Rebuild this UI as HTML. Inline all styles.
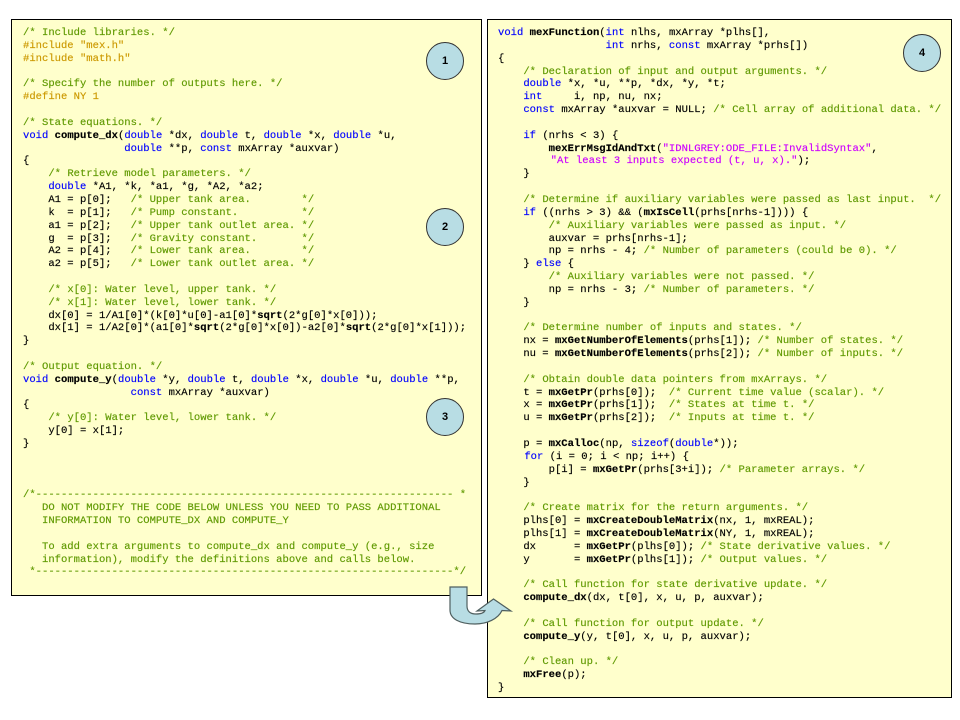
<!DOCTYPE html>
<html><head><meta charset="utf-8"><style>
html,body{margin:0;padding:0;background:#fff}
#p{position:relative;width:960px;height:720px;overflow:hidden;background:#fff}
.b{position:absolute;background:#ffc;border:1px solid #000;box-sizing:border-box}
pre{position:absolute;margin:0;font:10.55px/12.85px "Liberation Mono",monospace;color:#000;white-space:pre;-webkit-text-stroke:.15px currentColor}
i{font-style:normal;color:#5f9900}
u{text-decoration:none;color:#c90}
s{text-decoration:none;color:#00f}
b{font-weight:bold}
em{font-style:normal;color:#c0f}
.n{position:relative}
.c{position:absolute;width:38px;height:38px;border-radius:50%;background:#b8dde4;border:1px solid #333;box-sizing:border-box;text-align:center;font:bold 11px/36px "Liberation Sans",sans-serif;color:#000}
</style></head><body><div id="p">
<div class="b" style="left:11px;top:19px;width:471px;height:577px"></div>
<div class="b" style="left:487px;top:19px;width:465px;height:679px"></div>
<pre style="left:23px;top:27px"><i>/* Include libraries. */</i>
<u>#include "mex.h"</u>
<u>#include "math.h"</u>

<i>/* Specify the number of outputs here. */</i>
<u>#define NY 1</u>

<i>/* State equations. */</i>
<s>void</s> <b>compute_dx</b>(<s>double</s> *dx, <s>double</s> t, <s>double</s> *x, <s>double</s> *u,
                <s>double</s> **p, <s>const</s> mxArray *auxvar)
{
    <i>/* Retrieve model parameters. */</i>
    <s>double</s> *A1, *k, *a1, *g, *A2, *a2;
    A1 = p[0];   <i>/* Upper tank area.        */</i>
    k  = p[1];   <i>/* Pump constant.          */</i>
    a1 = p[2];   <i>/* Upper tank outlet area. */</i>
    g  = p[3];   <i>/* Gravity constant.       */</i>
    A2 = p[4];   <i>/* Lower tank area.        */</i>
    a2 = p[5];   <i>/* Lower tank outlet area. */</i>

    <i>/* x[0]: Water level, upper tank. */</i>
    <i>/* x[1]: Water level, lower tank. */</i>
    dx[0] = 1/A1[0]*(k[0]*u[0]-a1[0]*<b>sqrt</b>(2*g[0]*x[0]));
    dx[1] = 1/A2[0]*(a1[0]*<b>sqrt</b>(2*g[0]*x[0])-a2[0]*<b>sqrt</b>(2*g[0]*x[1]));
}

<i>/* Output equation. */</i>
<s>void</s> <b>compute_y</b>(<s>double</s> *y, <s>double</s> t, <s>double</s> *x, <s>double</s> *u, <s>double</s> **p,
                 <s>const</s> mxArray *auxvar)
{
    <i>/* y[0]: Water level, lower tank. */</i>
    y[0] = x[1];
}



<i>/*------------------------------------------------------------------ *
   DO NOT MODIFY THE CODE BELOW UNLESS YOU NEED TO PASS ADDITIONAL
   INFORMATION TO COMPUTE_DX AND COMPUTE_Y

   To add extra arguments to compute_dx and compute_y (e.g., size
   information), modify the definitions above and calls below.
 *------------------------------------------------------------------*/</i></pre>
<pre style="left:498px;top:27px"><s>void</s> <b>mexFunction</b>(<s>int</s> nlhs, mxArray *plhs[],
                 <s>int</s> nrhs, <s>const</s> mxArray *prhs[])
{
    <i>/* Declaration of input and output arguments. */</i>
    <s>double</s> *x, *u, **p, *dx, *y, *t;
    <s>int</s>     i, np, nu, nx;
    <s>const</s> mxArray *auxvar = NULL; <i>/* Cell array of additional data. */</i>

    <s>if</s> (nrhs &lt; 3) {
        <b>mexErrMsgIdAndTxt</b>(<em>"IDNLGREY:ODE_FILE:InvalidSyntax"</em>,
        <em class="n" style="left:2px">"At least 3 inputs expected (t, u, x)."</em><span class="n" style="left:2px">);</span>
    }

    <i>/* Determine if auxiliary variables were passed as last input.  */</i>
    <s>if</s> ((nrhs &gt; 3) &amp;&amp; (<b>mxIsCell</b>(prhs[nrhs-1]))) {
        <i>/* Auxiliary variables were passed as input. */</i>
        auxvar = prhs[nrhs-1];
        np = nrhs - 4; <i>/* Number of parameters (could be 0). */</i>
    } <s>else</s> {
        <i>/* Auxiliary variables were not passed. */</i>
        np = nrhs - 3; <i>/* Number of parameters. */</i>
    }

    <i>/* Determine number of inputs and states. */</i>
    nx = <b>mxGetNumberOfElements</b>(prhs[1]); <i>/* Number of states. */</i>
    nu = <b>mxGetNumberOfElements</b>(prhs[2]); <i>/* Number of inputs. */</i>

    <i>/* Obtain double data pointers from mxArrays. */</i>
    t = <b>mxGetPr</b>(prhs[0]);  <i>/* Current time value (scalar). */</i>
    x = <b>mxGetPr</b>(prhs[1]);  <i>/* States at time t. */</i>
    u = <b>mxGetPr</b>(prhs[2]);  <i>/* Inputs at time t. */</i>

    p = <b>mxCalloc</b>(np, <s>sizeof</s>(<s>double</s>*));
    <span class="n" style="left:1px"><s>for</s> (i = 0; i &lt; np; i++) {</span>
        p[i] = <b>mxGetPr</b>(prhs[3+i]); <i>/* Parameter arrays. */</i>
    }

    <i>/* Create matrix for the return arguments. */</i>
    plhs[0] = <b>mxCreateDoubleMatrix</b>(nx, 1, mxREAL);
    plhs[1] = <b>mxCreateDoubleMatrix</b>(NY, 1, mxREAL);
    dx      = <b>mxGetPr</b>(plhs[0]); <i>/* State derivative values. */</i>
    y       = <b>mxGetPr</b>(plhs[1]); <i>/* Output values. */</i>

    <i>/* Call function for state derivative update. */</i>
    <b>compute_dx</b>(dx, t[0], x, u, p, auxvar);

    <i>/* Call function for output update. */</i>
    <b>compute_y</b>(y, t[0], x, u, p, auxvar);

    <i>/* Clean up. */</i>
    <b>mxFree</b>(p);
}</pre>
<div class="c" style="left:426px;top:42px">1</div>
<div class="c" style="left:426px;top:208px">2</div>
<div class="c" style="left:426px;top:398px">3</div>
<div class="c" style="left:903px;top:34px">4</div>
<svg style="position:absolute;left:0;top:0" width="960" height="720"><path d="M450 587H467V606C467 611 470 614 476 614C480 614 484 613 485 610.500L477 611L493.500 599L511 611L502 610.500C498 619 487 624 475 624C460 624 450 619 450 610Z" fill="#b8dde4" stroke="#4f5f5f" stroke-width="1.200"/></svg>
</div></body></html>
